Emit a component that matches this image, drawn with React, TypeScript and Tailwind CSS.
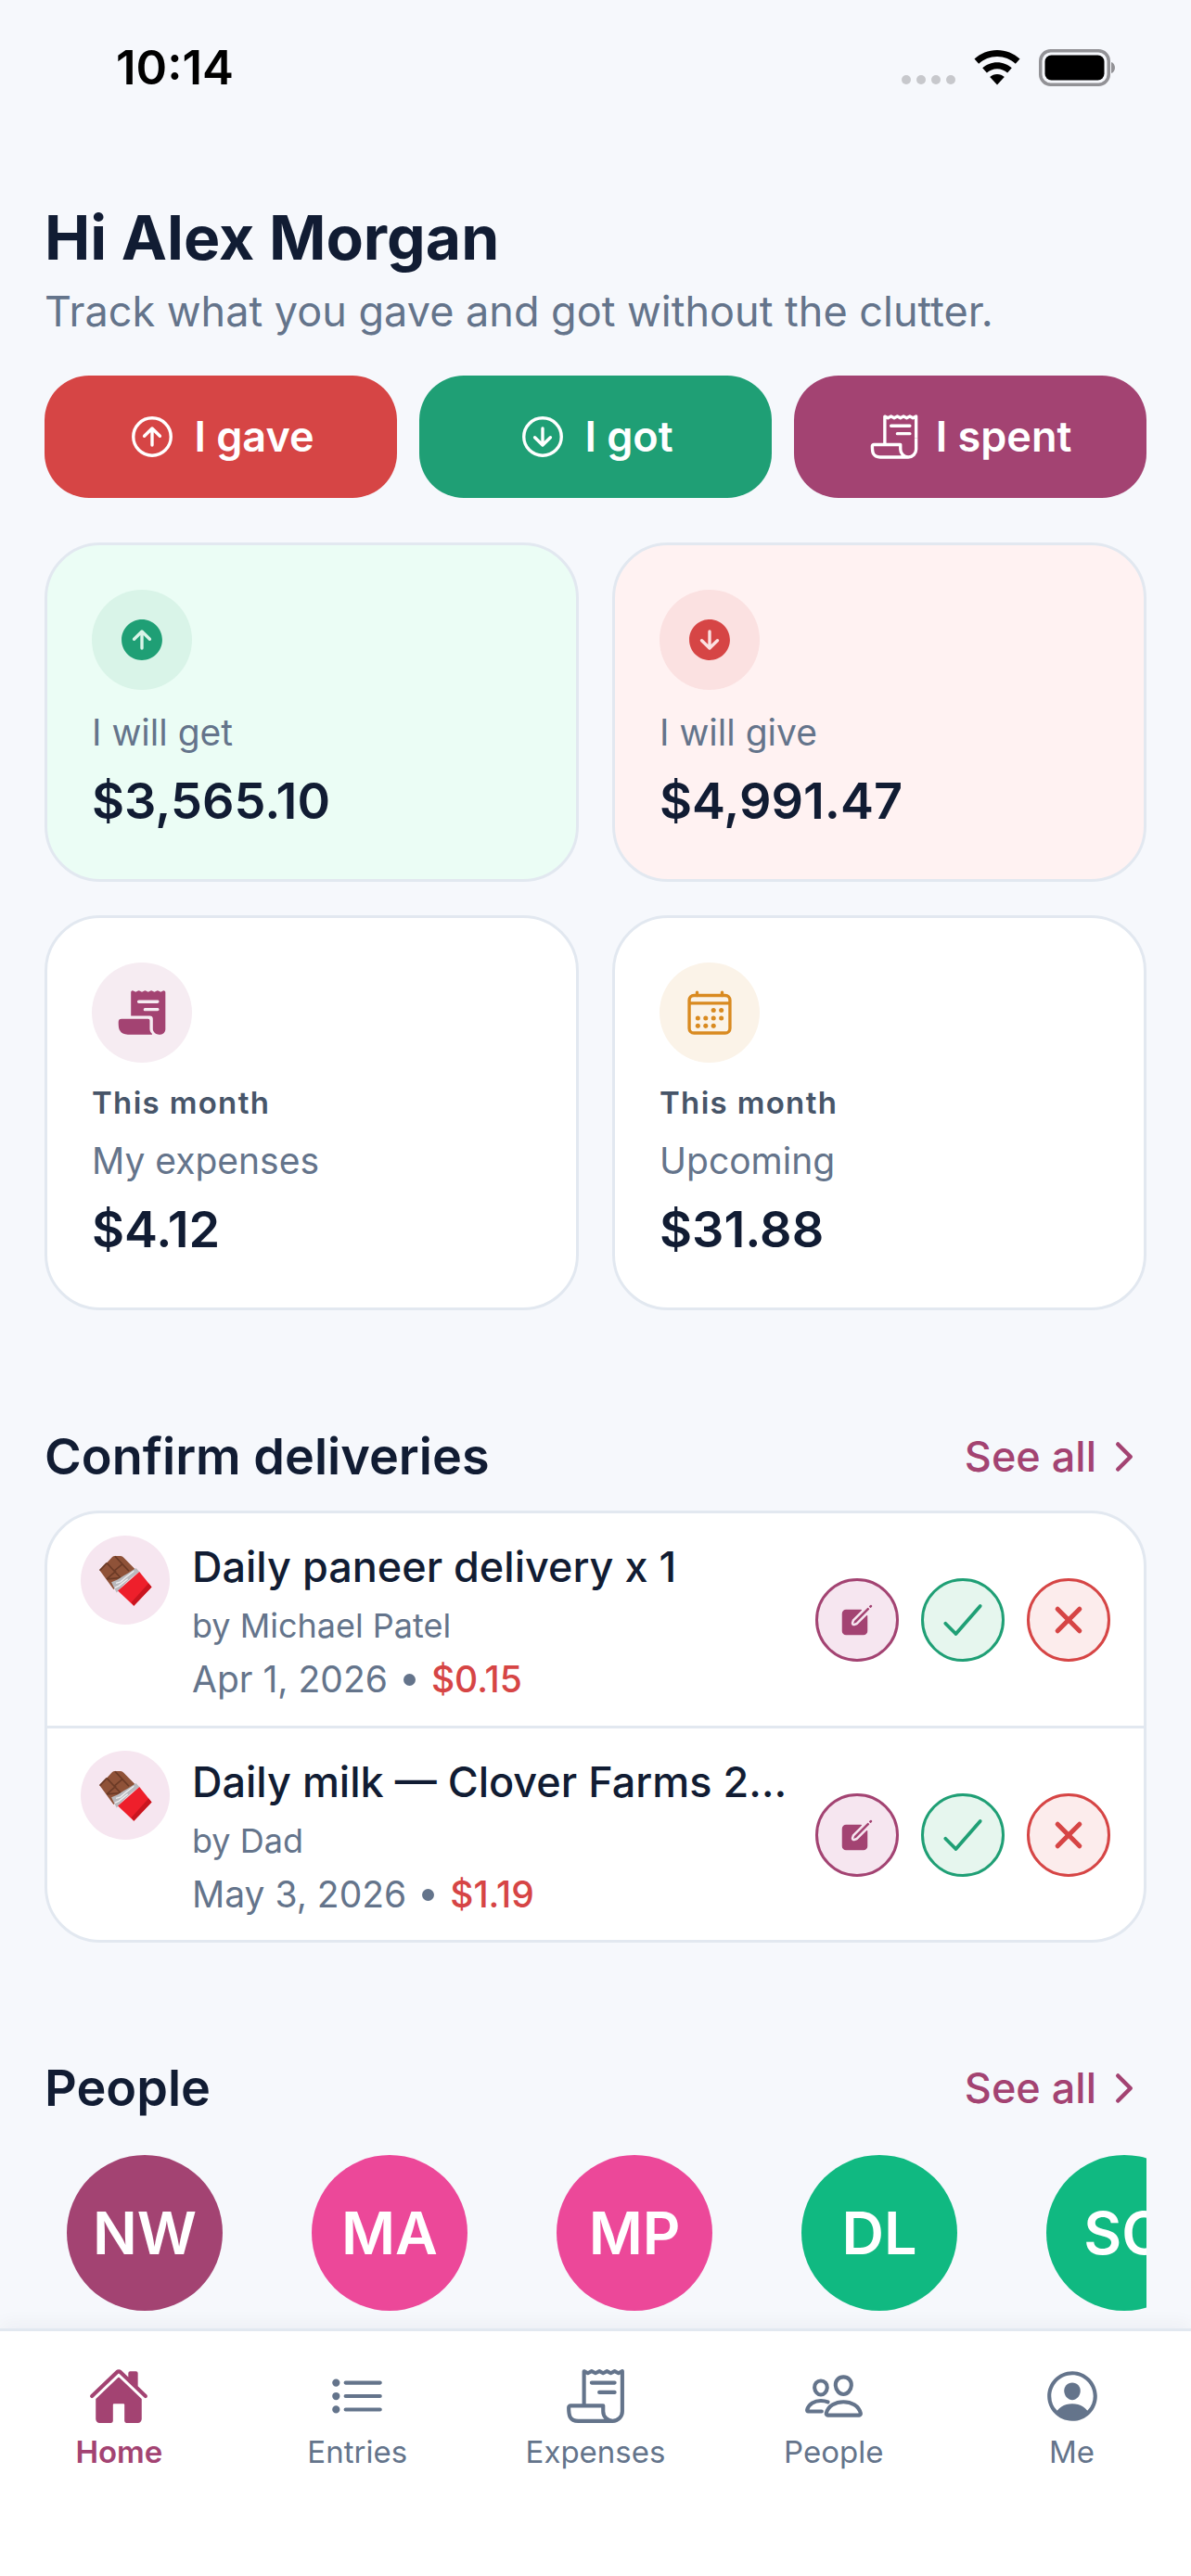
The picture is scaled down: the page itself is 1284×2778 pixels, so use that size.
import React from "react";
import {
  IoArrowUpCircleOutline,
  IoArrowDownCircleOutline,
  IoArrowUpCircle,
  IoArrowDownCircle,
  IoReceiptOutline,
  IoReceipt,
  IoCalendarOutline,
  IoChevronForward,
  IoCreate,
  IoCheckmark,
  IoClose,
  IoHome,
  IoListOutline,
  IoPeopleOutline,
  IoPersonCircleOutline,
} from "react-icons/io5";

function Wifi() {
  return (
    <svg width="50" height="38" viewBox="0 0 50 38" fill="#000">
      <path d="M25 0C15.5 0 7 3.6 0.5 9.6L5.2 14.8C10.4 10 17.3 7 25 7s14.6 3 19.8 7.8l4.7-5.2C43 3.6 34.5 0 25 0Z" />
      <path d="M25 13.2c-6.1 0-11.6 2.3-15.8 6.1l4.7 5.2c3-2.7 6.9-4.3 11.1-4.3s8.1 1.6 11.1 4.3l4.7-5.2C36.6 15.5 31.1 13.2 25 13.2Z" />
      <path d="M25 26c-3 0-5.7 1.1-7.8 3L25 37.5 32.8 29c-2.1-1.9-4.8-3-7.8-3Z" />
    </svg>
  );
}

function Battery() {
  return (
    <svg width="82" height="40" viewBox="0 0 82 40">
      <rect x="1.75" y="1.75" width="73.5" height="36.5" rx="11" fill="none" stroke="#929296" strokeWidth="3.5" />
      <rect x="6.5" y="6.5" width="64" height="27" rx="7" fill="#000" />
      <path d="M78 14c2.5 0.8 4 3 4 6s-1.5 5.2-4 6Z" fill="#929296" />
    </svg>
  );
}

function Chocolate() {
  return (
    <svg width="60" height="57" viewBox="130 95 180 172">
      <path d="M137 148 L178 104 Q182 100 188 101 L205 101 Q211 101 215 106 L258 150 L182 210 Z" fill="#8f5238" />
      <path d="M160 124 L205 172 M187 102 L232 150 M137 148 L160 124 M190 150 L160 176 M212 126 L184 150 M160 176 L205 172" stroke="#6b3a26" strokeWidth="5" fill="none" />
      <path d="M175 186 L195 178 L215 165 L232 155 L255 140 L266 152 L240 172 L215 195 L192 220 L184 205 Z" fill="#b9b9bd" />
      <path d="M190 190 L205 185 L220 172 L248 150 M186 205 L200 198 L228 176" stroke="#efeff1" strokeWidth="4" fill="none" />
      <path d="M196 214 L266 152 L306 202 L248 263 Z" fill="#ee1f2b" />
      <path d="M248 263 L306 202 L296 190 L240 252 Z" fill="#c9151f" />
    </svg>
  );
}

function ActionButtons() {
  return (
    <div className="flex shrink-0 items-center gap-[24px]">
      <div className="flex h-[90px] w-[90px] items-center justify-center rounded-full border-[3px] border-[#a34372] bg-[#f6e6f0] text-[#a34372]">
        <IoCreate size={40} />
      </div>
      <div className="flex h-[90px] w-[90px] items-center justify-center rounded-full border-[3px] border-[#1f9f75] bg-[#e6f6ee] text-[#1f9f75]">
        <IoCheckmark size={60} />
      </div>
      <div className="flex h-[90px] w-[90px] items-center justify-center rounded-full border-[3px] border-[#d64545] bg-[#fcecec] text-[#d64545]">
        <IoClose size={54} />
      </div>
    </div>
  );
}

function Delivery({ title, by, date, amount, first }: { title: string; by: string; date: string; amount: string; first?: boolean }) {
  return (
    <div className={`flex items-center gap-[24px] px-[36px] pt-[24px] ${first ? "border-b-[3px] border-[#e2e8f0] pb-[23px]" : "pb-[22px]"}`}>
      <div className="flex min-w-0 flex-1 items-start gap-[24px]">
        <div className="flex h-[96px] w-[96px] shrink-0 items-center justify-center rounded-full bg-[#f6e6f0]">
          <Chocolate />
        </div>
        <div className="min-w-0 flex-1 pt-[4px]">
          <div className="truncate text-[45px] leading-[60px] font-medium text-[#111c33]">{title}</div>
          <div className="mt-[9px] text-[36px] leading-[48px] text-[#64748b]">{by}</div>
          <div className="mt-[7px] flex items-center text-[39px] leading-[54px] text-[#64748b]">
            <span>{date}</span>
            <span className="mx-[17px] h-[13px] w-[13px] rounded-full bg-[#64748b]"></span>
            <span className="font-medium text-[#d64545]">{amount}</span>
          </div>
        </div>
      </div>
      <ActionButtons />
    </div>
  );
}

function SectionHeader({ title }: { title: string }) {
  return (
    <div className="flex items-center justify-between">
      <div className="text-[54px] leading-[72px] font-semibold text-[#111c33]">{title}</div>
      <div className="flex items-center gap-[6px] text-[45px] leading-[60px] font-medium text-[#a34372]">
        <span>See all</span>
        <IoChevronForward size={48} />
      </div>
    </div>
  );
}

function Stat({
  bg,
  circle,
  icon,
  eyebrow,
  label,
  amount,
}: {
  bg: string;
  circle: string;
  icon: React.ReactNode;
  eyebrow?: string;
  label: string;
  amount: string;
}) {
  return (
    <div className={`rounded-[60px] border-[3px] border-[#e2e8f0] p-[48px] ${bg}`}>
      <div className={`flex h-[108px] w-[108px] items-center justify-center rounded-full ${circle}`}>{icon}</div>
      {eyebrow ? (
        <div className="mt-[21px] text-[33px] leading-[45px] font-semibold tracking-[1.32px] text-[#475569]">{eyebrow}</div>
      ) : null}
      <div className={`${eyebrow ? "mt-[13px]" : "mt-[19px]"} text-[39px] leading-[54px] text-[#64748b]`}>{label}</div>
      <div className="mt-[11px] text-[54px] leading-[72px] font-semibold text-[#111c33]">{amount}</div>
    </div>
  );
}

function QuickButton({ bg, icon, label }: { bg: string; icon: React.ReactNode; label: string }) {
  return (
    <div className={`flex h-[132px] flex-1 items-center justify-center gap-[18px] rounded-[48px] text-[45px] font-semibold text-white ${bg}`}>
      {icon}
      <span>{label}</span>
    </div>
  );
}

function Person({ initials, bg }: { initials: string; bg: string }) {
  return (
    <div className="flex w-[216px] shrink-0 justify-center">
      <div className={`flex h-[168px] w-[168px] shrink-0 items-center justify-center rounded-full text-[63px] font-semibold text-white ${bg}`}>{initials}</div>
    </div>
  );
}

function Tab({ icon, label, active }: { icon: React.ReactNode; label: string; active?: boolean }) {
  return (
    <div className={`flex flex-1 flex-col items-center ${active ? "text-[#a34372]" : "text-[#64748b]"}`}>
      {icon}
      <span className={`mt-[6px] text-[33px] leading-[42px] ${active ? "font-semibold" : "font-normal"}`}>{label}</span>
    </div>
  );
}

export default function App() {
  return (
    <div className="flex h-[2778px] w-[1284px] flex-col overflow-hidden bg-[#f6f8fc] font-[Inter,sans-serif]">
      <div className="min-h-0 flex-1 overflow-hidden">
        <div className="flex h-[120px] items-end justify-between pr-[82px] pb-[17px] pl-[125px]">
          <div className="text-[51px] leading-[60px] font-semibold text-black">10:14</div>
          <div className="flex items-center gap-[20px] pb-[10px]">
            <div className="flex gap-[6px] self-end pb-[2px]">
              <span className="h-[10px] w-[10px] rounded-full bg-[#c7c8cc]"></span>
              <span className="h-[10px] w-[10px] rounded-full bg-[#c7c8cc]"></span>
              <span className="h-[10px] w-[10px] rounded-full bg-[#c7c8cc]"></span>
              <span className="h-[10px] w-[10px] rounded-full bg-[#c7c8cc]"></span>
            </div>
            <Wifi />
            <Battery />
          </div>
        </div>

        <div className="px-[48px] pt-[94px]">
          <div className="text-[66px] leading-[84px] font-bold text-[#111c33]">Hi Alex Morgan</div>
          <div className="mt-[8px] text-[45px] leading-[60px] text-[#64748b]">Track what you gave and got without the clutter.</div>

          <div className="mt-[39px] flex gap-[24px]">
            <QuickButton bg="bg-[#d64545]" label="I gave" icon={<IoArrowUpCircleOutline size={54} />} />
            <QuickButton bg="bg-[#1f9f75]" label="I got" icon={<IoArrowDownCircleOutline size={54} />} />
            <QuickButton bg="bg-[#a34372]" label="I spent" icon={<IoReceiptOutline size={54} />} />
          </div>

          <div className="mt-[48px] grid grid-cols-2 gap-[36px]">
            <Stat bg="bg-[#ebfdf5]" circle="bg-[#d9f4e8]" icon={<IoArrowUpCircle size={54} className="text-[#1f9f75]" />} label="I will get" amount="$3,565.10" />
            <Stat bg="bg-[#fff2f2]" circle="bg-[#fbe1e1]" icon={<IoArrowDownCircle size={54} className="text-[#d64545]" />} label="I will give" amount="$4,991.47" />
            <Stat bg="bg-white" circle="bg-[#f6ecf2]" icon={<IoReceipt size={54} className="text-[#a34372]" />} eyebrow="This month" label="My expenses" amount="$4.12" />
            <Stat bg="bg-white" circle="bg-[#fbf3e8]" icon={<IoCalendarOutline size={54} className="text-[#d98a20]" />} eyebrow="This month" label="Upcoming" amount="$31.88" />
          </div>

          <div className="mt-[122px]">
            <SectionHeader title="Confirm deliveries" />
            <div className="mt-[22px] rounded-[60px] border-[3px] border-[#e2e8f0] bg-white">
              <Delivery first title="Daily paneer delivery x 1" by="by Michael Patel" date="Apr 1, 2026" amount="$0.15" />
              <Delivery title="Daily milk — Clover Farms 2L x 1" by="by Dad" date="May 3, 2026" amount="$1.19" />
            </div>
          </div>

          <div className="mt-[121px]">
            <SectionHeader title="People" />
            <div className="mt-[36px] flex gap-[48px] overflow-hidden">
              <Person initials="NW" bg="bg-[#a34372]" />
              <Person initials="MA" bg="bg-[#ec4899]" />
              <Person initials="MP" bg="bg-[#ec4899]" />
              <Person initials="DL" bg="bg-[#10b981]" />
              <Person initials="SC" bg="bg-[#10b981]" />
            </div>
          </div>
        </div>
      </div>

      <div className="flex h-[267px] shrink-0 items-start border-t-[3px] border-[#e2e8f0] bg-white pt-[37px] shadow-[0_-6px_18px_rgba(15,23,42,0.04)]">
        <Tab active label="Home" icon={<IoHome size={66} />} />
        <Tab label="Entries" icon={<IoListOutline size={66} />} />
        <Tab label="Expenses" icon={<IoReceiptOutline size={66} />} />
        <Tab label="People" icon={<IoPeopleOutline size={66} />} />
        <Tab label="Me" icon={<IoPersonCircleOutline size={66} />} />
      </div>
    </div>
  );
}
